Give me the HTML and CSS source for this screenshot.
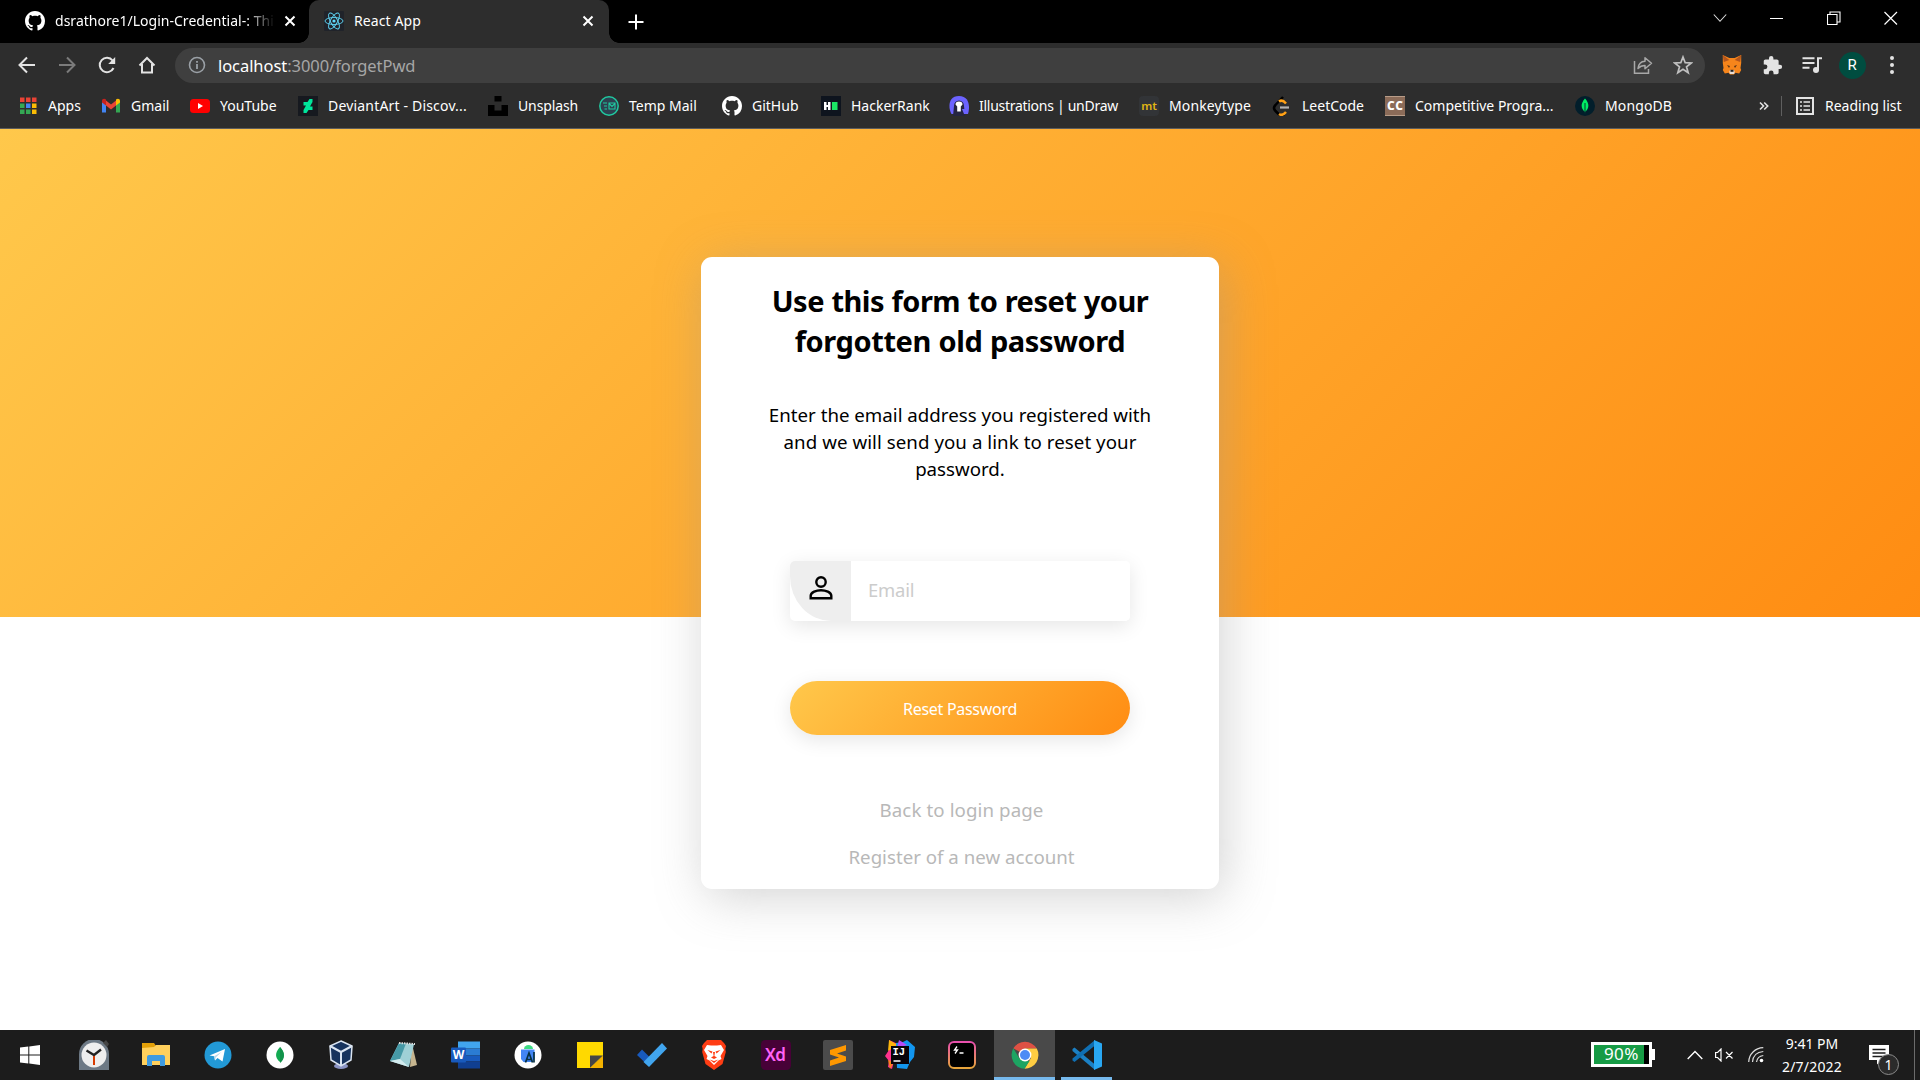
FILE: index.html
```html
<!DOCTYPE html>
<html lang="en">
<head>
<meta charset="utf-8">
<title>React App</title>
<link rel="stylesheet" href="styles.css">
</head>
<body>
<svg class="defs" aria-hidden="true">
  <symbol id="github" viewBox="0 0 16 16"><path fill="#fff" d="M8 0C3.58 0 0 3.58 0 8c0 3.54 2.29 6.53 5.47 7.59.4.07.55-.17.55-.38 0-.19-.01-.82-.01-1.49-2.01.37-2.53-.49-2.69-.94-.09-.23-.48-.94-.82-1.13-.28-.15-.68-.52-.01-.53.63-.01 1.08.58 1.23.82.72 1.21 1.87.87 2.33.66.07-.52.28-.87.51-1.07-1.78-.2-3.64-.89-3.64-3.95 0-.87.31-1.59.82-2.15-.08-.2-.36-1.02.08-2.12 0 0 .67-.21 2.2.82.64-.18 1.32-.27 2-.27s1.36.09 2 .27c1.53-1.04 2.2-.82 2.2-.82.44 1.1.16 1.92.08 2.12.51.56.82 1.27.82 2.15 0 3.07-1.87 3.75-3.65 3.95.29.25.54.73.54 1.48 0 1.07-.01 1.93-.01 2.2 0 .21.15.46.55.38A8.01 8.01 0 0 0 16 8c0-4.42-3.58-8-8-8z"/></symbol>
  <symbol id="cross" viewBox="0 0 12 12"><path d="M1.5 1.5l9 9M10.500 1.5l-9 9" stroke="#fff" stroke-width="2"/></symbol>
</svg>

<header class="browser">
  <div class="tabstrip">
    <div class="tab">
      <svg class="i20"><use href="#github"/></svg>
      <span class="tab-title fade">dsrathore1/Login-Credential-: Thi</span>
      <svg class="i12"><use href="#cross"/></svg>
    </div>
    <div class="tab active">
      <svg class="i20" viewBox="0 0 20 20"><rect width="20" height="20" rx="1" fill="#20232a"/><g fill="none" stroke="#61dafb" stroke-width=".9"><ellipse cx="10" cy="10" rx="9" ry="3.500"/><ellipse cx="10" cy="10" rx="9" ry="3.500" transform="rotate(60 10 10)"/><ellipse cx="10" cy="10" rx="9" ry="3.500" transform="rotate(120 10 10)"/></g><circle cx="10" cy="10" r="1.600" fill="#61dafb"/></svg>
      <span class="tab-title">React App</span>
      <svg class="i12"><use href="#cross"/></svg>
    </div>
    <svg class="newtab" viewBox="0 0 16 16"><path d="M8 .5v15M.5 8h15" stroke="#fff" stroke-width="2"/></svg>
    <div class="window-controls">
      <svg viewBox="0 0 14 14"><path d="M.8 3.500l6.200 6.800 6.200-6.800" fill="none" stroke="#ddd" stroke-width="1.100"/></svg>
      <svg viewBox="0 0 14 14"><path d="M0 7.500h13" stroke="#fff"/></svg>
      <svg viewBox="0 0 14 14"><path d="M.5 3.500h9.500v10H.5zM3 3.500V1h10v10h-3" fill="none" stroke="#fff" stroke-width="1.100"/></svg>
      <svg viewBox="0 0 14 14"><path d="M.5 1l12.500 12.500M13 1L.5 13.500" stroke="#fff" stroke-width="1.200"/></svg>
    </div>
  </div>

  <div class="toolbar">
    <span class="tool"><svg class="i18" viewBox="0 0 18 18"><path d="M17 9H2M9 1.500L1.500 9 9 16.500" fill="none" stroke="#e3e3e3" stroke-width="2"/></svg></span>
    <span class="tool"><svg class="i18" viewBox="0 0 18 18"><path d="M1 9h15M9 1.500L16.500 9 9 16.500" fill="none" stroke="#7b7b7b" stroke-width="2"/></svg></span>
    <span class="tool"><svg class="i18" viewBox="0 0 18 18"><path d="M15.500 12A7.200 7.200 0 1 1 14.600 4.500" fill="none" stroke="#e3e3e3" stroke-width="2"/><path d="M17.200 1v7h-7z" fill="#e3e3e3"/></svg></span>
    <span class="tool"><svg class="i18" viewBox="0 0 18 18"><path d="M1.500 9.500L9 2l7.500 7.500M4 8v8.500h10V8" fill="none" stroke="#e3e3e3" stroke-width="2"/></svg></span>
    <div class="omnibox">
      <svg class="i18" viewBox="0 0 18 18"><circle cx="9" cy="9" r="7.500" fill="none" stroke="#9aa0a6" stroke-width="1.600"/><path d="M9 8v5M9 5v1.800" stroke="#9aa0a6" stroke-width="1.800"/></svg>
      <span class="url"><b>localhost</b>:3000/forgetPwd</span>
      <svg class="i20" viewBox="0 0 20 20"><path d="M1.500 6v12.200h14V14" fill="none" stroke="#a8a8a8" stroke-width="1.500"/><path d="M5 13.500c.5-4.500 3-7 7-7.200V2.800l6.500 5.500-6.500 5.500v-3.300c-3 0-5 .8-7 3z" fill="none" stroke="#a8a8a8" stroke-width="1.500" stroke-linejoin="round"/></svg>
      <svg class="i20" viewBox="0 0 20 20"><path d="M10 2l2.200 5.700 6.100.3-4.800 3.800 1.700 5.900-5.200-3.400-5.200 3.400 1.700-5.900L1.700 8l6.100-.3z" fill="none" stroke="#c0c0c0" stroke-width="1.700"/></svg>
    </div>
    <div class="extensions">
      <span class="tool"><svg class="i20" viewBox="0 0 20 20"><path d="M.8 0l6.500 3h5.400l6.500-3v8l-.7 5 .7 2-2 3.500-3.700-.8L12 19.500H8l-1.500-1.800-3.700.8-2-3.500.7-2-.7-5z" fill="#f6851b"/><path d="M.8 0l6.500 5-5.500 2zM19.200 0l-6.500 5 5.500 2z" fill="#b4561c"/><path d="M5 10l3 1-1 2zM15 10l-3 1 1 2z" fill="#5a3416"/><path d="M8 15h4l.7 2-.7 2H8l-.7-2z" fill="#e8ddd4"/><path d="M8.500 14.800h3v2h-3z" fill="#222"/></svg></span>
      <span class="tool"><svg class="i22" viewBox="0 0 24 24"><path fill="#e3e3e3" d="M20.500 11H19V7c0-1.100-.9-2-2-2h-4V3.500a2.500 2.500 0 0 0-5 0V5H4c-1.100 0-2 .9-2 2v3.800h1.500a2.700 2.700 0 0 1 0 5.400H2V20c0 1.100.9 2 2 2h3.800v-1.500a2.700 2.700 0 0 1 5.400 0V22H17c1.100 0 2-.9 2-2v-4h1.500a2.500 2.500 0 0 0 0-5z"/></svg></span>
      <span class="tool"><svg class="i20" viewBox="0 0 20 20"><path d="M.5 3.200h12M.5 8h12M.5 12.800h7" stroke="#e3e3e3" stroke-width="2"/><path d="M16 15V3.200h4" fill="none" stroke="#e3e3e3" stroke-width="2"/><circle cx="14" cy="15" r="3" fill="#e3e3e3"/></svg></span>
      <span class="tool"><span class="avatar">R</span></span>
      <span class="tool"><svg class="i20" viewBox="0 0 20 20"><g fill="#e3e3e3"><circle cx="10" cy="3" r="2"/><circle cx="10" cy="10" r="2"/><circle cx="10" cy="17" r="2"/></g></svg></span>
    </div>
  </div>

  <nav class="bookmarks">
    <a><svg viewBox="0 0 20 20"><g fill="#ea4335"><path d="M2 1.500h4.500V6H2zM8 1.500h4.500V6H8zM14 1.500h4.500V6H14z"/></g><path fill="#34a853" d="M2 7.500h4.500V12H2zM2 13.500h4.500V18H2z"/><path fill="#4285f4" d="M8 7.500h4.500V12H8z"/><path fill="#34a853" d="M8 13.500h4.500V18H8z"/><path fill="#fbbc05" d="M14 7.500h4.500V12H14zM14 13.500h4.500V18H14z"/></svg><span>Apps</span></a>
    <a><svg viewBox="0 0 20 20"><path fill="#4285f4" d="M1 5v11.500h4V8.800z"/><path fill="#34a853" d="M19 5v11.500h-4V8.800z"/><path fill="#ea4335" d="M5 4.500l5 4 5-4v5l-5 4-5-4z"/><path fill="#c5221f" d="M1 5c0-2 2-3 4-1.500v6L1 6.500z"/><path fill="#fbbc04" d="M19 5c0-2-2-3-4-1.500v6l4-3z"/></svg><span>Gmail</span></a>
    <a><svg viewBox="0 0 20 20"><rect y="3" width="20" height="14" rx="3.500" fill="#f00"/><path fill="#fff" d="M8 7v6l5-3z"/></svg><span>YouTube</span></a>
    <a><svg viewBox="0 0 20 20"><rect width="20" height="20" fill="#16191f"/><path fill="#00e59b" d="M14.500 3v3L12 10.500h2.500V14h-4L8.500 17h-3v-3L8 9.500H5.500V6h4L11.500 3z"/></svg><span class="w1">DeviantArt - Discov...</span></a>
    <a><svg viewBox="0 0 20 20"><path d="M6.500 0h7v5.500h-7zM0 9h6.500v5.500h7V9H20v11H0z" fill="#000"/></svg><span class="n1">Unsplash</span></a>
    <a><svg viewBox="0 0 20 20"><circle cx="10" cy="10" r="9.200" fill="#2d4150" stroke="#20c9a0" stroke-width="1.500"/><path d="M10 7h6v6h-6zM10 7.500l3 3 3-3M4 7h4M5 10h3M5.500 13H8" fill="none" stroke="#20c9a0" stroke-width="1.100"/></svg><span>Temp Mail</span></a>
    <a><svg><use href="#github"/></svg><span>GitHub</span></a>
    <a><svg viewBox="0 0 20 20"><rect width="20" height="20" fill="#0e141e"/><path fill="#fff" d="M3 6h2.500v3H7V6h2.500v8H7v-3H5.500v3H3z"/><path fill="#1be665" d="M11 6h5.500v8H11z"/></svg><span>HackerRank</span></a>
    <a><svg viewBox="0 0 20 20"><path d="M2.500 18C-1 12-1 0 10 0s11 12 9 18z" fill="#6c63ff"/><path d="M4 20l1-10a5 5.500 0 0 1 10 0l1 10z" fill="#252542"/><path d="M6.500 8.500a3.500 3 0 0 1 7 0l-1.700 2v5H8.200v-5z" fill="#fff"/><path d="M13 13h6v5h-4z" fill="#6c63ff"/></svg><span class="n2">Illustrations | unDraw</span></a>
    <a><svg viewBox="0 0 20 20"><rect width="20" height="20" rx="4" fill="#323437"/><text x="10" y="14" text-anchor="middle" font-size="11.500" font-weight="600" fill="#e2b714">mt</text></svg><span class="w2">Monkeytype</span></a>
    <a><svg viewBox="0 0 20 20"><path d="M11 1L3.500 9c-2 2-2 4 0 6l3.500 3.500c1.500 1 3.500 1 5 0" fill="none" stroke="#000" stroke-width="2.500"/><path d="M7 5.500C9 4 11 4 14 7.500M7 18c2 1.500 4 1.500 7-2" fill="none" stroke="#ffa116" stroke-width="2.500"/><path d="M8 11.500h9" stroke="#b3b3b3" stroke-width="2.200"/></svg><span>LeetCode</span></a>
    <a><svg viewBox="0 0 20 20"><rect width="20" height="20" fill="#8b6b58"/><path d="M0 .5h20M0 19.500h20" stroke="#b89c88"/><text x="2" y="14" font-size="12" font-weight="800" fill="#fff" textLength="16">CC</text></svg><span>Competitive Progra...</span></a>
    <a><svg viewBox="0 0 20 20"><circle cx="10" cy="10" r="10" fill="#021e2b"/><path d="M10 2.500c4.500 5 4.500 9.500 0 13.500-4.500-4-4.500-8.500 0-13.500z" fill="#00ed64"/><path d="M10 7v10.500" stroke="#023430"/></svg><span class="w2">MongoDB</span></a>
    <div class="bookmarks-end">
      <svg class="more" viewBox="0 0 10 10"><path d="M1 1.500L4.500 5 1 8.500M5.200 1.500L8.700 5 5.200 8.500" fill="none" stroke="#e3e3e3" stroke-width="1.600"/></svg>
      <i class="divider"></i>
      <svg class="i18" viewBox="0 0 18 18"><path d="M1 1h16v16H1z" fill="none" stroke="#e3e3e3" stroke-width="2"/><path d="M4 5h2M4 9h2M4 13h2M7.500 5H14M7.500 9H14M7.500 13H14" stroke="#e3e3e3" stroke-width="1.700"/></svg>
      <span>Reading list</span>
    </div>
  </nav>
</header>

<main class="page">
  <form class="card">
    <h1>Use this form to reset your<br><span>forgotten old password</span></h1>
    <p>Enter the email address you registered with<br><span>and we will send you a link to reset your</span><br>password.</p>
    <label class="field">
      <span class="field-icon"><svg viewBox="0 0 24 24"><g fill="none" stroke="#000" stroke-width="2.400"><circle cx="12" cy="6" r="4.700"/><path d="M1.700 22.300v-2.500c0-3.500 5.800-5.600 10.300-5.600s10.300 2.100 10.300 5.600v2.500z"/></g></svg></span>
      <input type="email" placeholder="Email">
    </label>
    <button type="button">Reset Password</button>
    <a class="link back">Back to login page</a>
    <a class="link">Register of a new account</a>
  </form>
</main>

<footer class="taskbar">
  <div class="start"><svg viewBox="0 0 20 20"><path fill="#fff" d="M0 2.600L8.300 1.500v8H0zM9.300 1.400L20 0v9.500H9.300zM0 10.500h8.300v8L0 17.400zM9.300 10.500H20V20L9.300 18.600z"/></svg></div>
  <div class="app"><svg viewBox="0 0 30 30"><path d="M0 30V14a15 15 0 0 1 30 0v16z" fill="#6d7985"/><path d="M24 3l3-3 3 4-2 3z" fill="#444"/><circle cx="15" cy="15" r="12.500" fill="#eee"/><path d="M7.500 10.500L15 15l7-5.500" fill="none" stroke="#222" stroke-width="2.300"/><path d="M15 16v9" stroke="#d83b01" stroke-width="2"/></svg></div>
  <div class="app"><svg viewBox="0 0 30 30"><path d="M1 3h12l2 3v4H1z" fill="#e3a008"/><path d="M1 8l12-1 2-2h14v20H1z" fill="#ffd05c"/><path d="M6 26V17q0-2 2-2h14q2 0 2 2v9h-5v-5h-8v5z" fill="#3f9be0"/></svg></div>
  <div class="app"><svg viewBox="0 0 30 30"><circle cx="15" cy="15" r="13.500" fill="#2299d6"/><path d="M6.500 15.500L22 9l-2.500 12.500-5-3.500-2.500 2.500-.8-4.200z" fill="#fff"/><path d="M11.200 16.300L18.500 12l-5.800 5.500L12 20.500z" fill="#b5d7ea"/></svg></div>
  <div class="app"><svg viewBox="0 0 30 30"><circle cx="15" cy="15" r="13.500" fill="#fff"/><path d="M15 7c5.500 6 5 11 0 15-5-4-5.500-9 0-15z" fill="#13aa52"/><path d="M15 7v16c5-4 5.500-10 0-16z" fill="#12924a"/></svg></div>
  <div class="app"><svg viewBox="0 0 30 30"><ellipse cx="14" cy="26" rx="7" ry="3" fill="#8b94c4"/><path d="M14 1l11 5-1 14-10 6-10-6L3 6z" fill="#17335e" stroke="#dbe5f2" stroke-width="1.500"/><path d="M3 6l11 6 11-6M14 12v14" fill="none" stroke="#dbe5f2" stroke-width="2"/></svg></div>
  <div class="app"><svg viewBox="0 0 30 30"><path d="M23 4l5 21-7 2z" fill="#c6b58f"/><path d="M10 3l15 1-5 23-19-6z" fill="#9fd0d6"/><path d="M10 3l7 .5L11 19 1 21z" fill="#4699a6"/><path d="M1 21l10-2 9 8z" fill="#d3ecef"/><path d="M10 3l16 1" stroke="#ddd" stroke-width="2" stroke-dasharray="1.500 1"/></svg></div>
  <div class="app"><svg viewBox="0 0 30 30"><path d="M7 1.500h22v7H7z" fill="#41a5ee"/><path d="M7 8.500h22v7H7z" fill="#2b7cd3"/><path d="M7 15.500h22v6H7z" fill="#185abd"/><path d="M7 21.500h22v7H7z" fill="#103f91"/><rect y="7.500" width="15" height="15" rx="1" fill="#185abd"/><text x="7.500" y="19" text-anchor="middle" font-size="12" font-weight="700" fill="#fff">W</text></svg></div>
  <div class="app"><svg viewBox="0 0 30 30"><circle cx="15" cy="15" r="13.500" fill="#fff"/><path d="M11 9a4.500 4 0 0 1 9 0z" fill="#3ddc84"/><path d="M8 9.500h13.500V19L19 22H10.500L8 19z" fill="#4285f4"/><path d="M12.500 22.500L16 13l3.500 9.500M14 19.500h4M21 12v10.500" fill="none" stroke="#073042" stroke-width="1.700"/></svg></div>
  <div class="app"><svg viewBox="0 0 30 30"><path d="M2 2h26v13.500L15.500 28H2z" fill="#ffd900"/><path d="M15 15.500h13L15 28z" fill="#454545"/><path d="M28 15.500V28H15z" fill="#f3b200"/></svg></div>
  <div class="app"><svg viewBox="0 0 30 30"><path d="M5 9.500l8.500 8.500-4 6L0 15z" fill="#185abd"/><path d="M25 3l5 5.500L12 27l-5.500-5z" fill="#41a5ee"/></svg></div>
  <div class="app"><svg viewBox="0 0 30 30"><path d="M8 0h14l3 3 2 3-.7 3 .5 3-3.300 12L15 30 6.500 24 3.200 12l.5-3L3 6l2-3z" fill="#ff3d14"/><path d="M8 5l4 .6h6L22 5l3 5-3.500 6 1 3-3 1.500L15 25l-4.500-4.500-3-1.500 1-3L5 10z" fill="#fff"/><path d="M8.500 10l5 1.500-1 2zM21.500 10l-5 1.500 1 2zM14 12h2l-.6 4 2.600 1.500-3 1.500-3-1.500 2.600-1.500zM10.500 19.500l4.500 1.500 4.500-1.500L15 23z" fill="#ff3d14"/></svg></div>
  <div class="app"><svg viewBox="0 0 30 30"><rect width="30" height="30" rx="4.500" fill="#470137"/><text x="4" y="21" font-size="17" font-weight="600" fill="#ff61f6" textLength="21">Xd</text></svg></div>
  <div class="app"><svg viewBox="0 0 30 30"><rect width="30" height="30" rx="2" fill="#4b4b4b"/><path d="M23 5v5.500l-9 3 9 3V21L7 26v-5.500l9-3-9-3V10z" fill="#ff9800"/></svg></div>
  <div class="app"><svg viewBox="0 0 30 30"><path d="M4 0l9 4-6 25-4-2 1-6-4-5 4-6z" fill="#ff318c"/><path d="M4 0l9 5-10 6z" fill="#fdb60d"/><path d="M11 3l7-1 4-2 8 7-1 10-4 5-3 7-10-1z" fill="#1296ef"/><path d="M14 0l8 5-10 3z" fill="#b74af7"/><path d="M3 20l6 2-4 7z" fill="#fc801d"/><path d="M6 6h18v18H6z" fill="#08040a"/><text x="7.500" y="15" font-size="10.500" font-weight="700" fill="#fff" class="mono">IJ</text><path d="M8.500 21h7" stroke="#fff" stroke-width="1.500"/></svg></div>
  <div class="app"><svg viewBox="0 0 30 30"><defs><linearGradient id="term" x2="0" y2="1"><stop stop-color="#e84fae"/><stop offset="1" stop-color="#e7a53b"/></linearGradient></defs><rect x="2" y="2" width="26" height="26" rx="5" fill="#000" stroke="url(#term)" stroke-width="2"/><path d="M10 6.500L7.500 10h3L8 13.500M12.500 13h4" fill="none" stroke="#fff" stroke-width="1.300"/></svg></div>
  <div class="app open focused"><svg viewBox="0 0 30 30"><path d="M15 15L3.300 8.300A13.800 13.800 0 0 1 26.800 8.500H15z" fill="#dd5144"/><path d="M15 8.500h11.800A13.800 13.800 0 0 1 14.500 28.800L21 18z" fill="#ffcd42"/><path d="M3.300 8.300L9.500 18.500 15 21h4.500l-5 7.800A13.800 13.800 0 0 1 3.300 8.300z" fill="#1da462"/><circle cx="15" cy="15" r="6.400" fill="#fff"/><circle cx="15" cy="15" r="5" fill="#4c8bf5"/></svg></div>
  <div class="app open"><svg viewBox="0 0 30 30"><path d="M2.500 7.500L23 24.500V30L.5 11V9z" fill="#1b80c4"/><path d="M2.500 22L23 5.500V0L.5 18.500v2z" fill="#0f6fb3"/><path d="M22 0l8 3.500v23L22 30z" fill="#29a7f2"/></svg></div>

  <div class="tray">
    <span class="battery"><span class="level">90%</span></span>
    <svg class="chevron" viewBox="0 0 16 10"><path d="M.7 9L8 1.500 15.300 9" fill="none" stroke="#fff" stroke-width="1.400"/></svg>
    <svg class="volume" viewBox="0 0 18 14"><path d="M.6 4.500h2L6 1v12L2.600 9.500h-2zM11 4l6.500 6.500M17.500 4L11 10.500" fill="none" stroke="#fff" stroke-width="1.200"/></svg>
    <svg class="wifi" viewBox="0 0 16 16"><g fill="none" stroke="#ddd" stroke-width="1.200"><path d="M.7 15C1 7 7 1 15.300.7M4.500 15C5 9 9 5 15.300 4.500M8.500 15c.5-3.500 3-6 6.800-6.500"/></g><circle cx="13.500" cy="13.500" r="1.800" fill="#fff"/></svg>
    <div class="clock"><span>9:41 PM</span><span class="w1">2/7/2022</span></div>
    <div class="notifications">
      <svg viewBox="0 0 20 20"><path d="M0 0h20v15h-7l-5 4.500V15H0z" fill="#fff"/><path d="M3.500 4.500h13M3.500 8h13M3.500 11.500h13" stroke="#1c1c1c" stroke-width="1.300"/></svg>
      <span class="badge">1</span>
    </div>
    <i class="show-desktop"></i>
  </div>
</footer>
</body>
</html>
```
FILE: styles.css
```css
* { box-sizing: border-box; }

body {
  margin: 0;
  width: 1920px;
  height: 1080px;
  overflow: hidden;
  display: flex;
  flex-direction: column;
  font-family: "Noto Sans", "Open Sans", sans-serif;
  font-size: 14px;
  color: #fff;
  background: #fff;
}

svg { display: block; flex: none; }
.defs { position: absolute; width: 0; height: 0; }
.i12 { width: 12px; height: 12px; }
.i18 { width: 18px; height: 18px; }
.i20 { width: 20px; height: 20px; }
.i22 { width: 21px; height: 21px; }

/* browser chrome */
.browser {
  flex: none;
  height: 129px;
  background: #2d2d2d;
  border-bottom: 1px solid #5c5c5c;
}

.tabstrip {
  height: 43px;
  display: flex;
  align-items: center;
  background: #000;
}

.tab {
  width: 309px;
  height: 43px;
  padding: 0 13px 2px 25px;
  display: flex;
  align-items: center;
  gap: 10px;
}

.tab-title {
  flex: 1;
  white-space: nowrap;
  letter-spacing: .09px;
}

.fade {
  margin-right: -1px;
  letter-spacing: .02px;
  mask-image: linear-gradient(90deg, #000 190px, transparent 220px);
}

.active {
  position: relative;
  width: 300px;
  padding: 0 15px 2px;
  background: #2d2d2d;
  border-radius: 10px 10px 0 0;
}

.active::before,
.active::after {
  content: "";
  position: absolute;
  bottom: 0;
  width: 10px;
  height: 10px;
}
.active::before { left: -10px; background: radial-gradient(circle at 0 0, transparent 9.5px, #2d2d2d 10px); }
.active::after { right: -10px; background: radial-gradient(circle at 100% 0, transparent 9.5px, #2d2d2d 10px); }

.newtab { width: 16px; height: 16px; margin-left: 19px; }

.window-controls {
  margin-left: auto;
  padding: 0 22px 7px 0;
  display: flex;
  gap: 43px;
}
.window-controls svg { width: 14px; height: 14px; }

.toolbar {
  height: 44px;
  padding-left: 7px;
  display: flex;
  align-items: center;
}

.tool {
  width: 40px;
  display: flex;
  align-items: center;
  justify-content: center;
}

.omnibox {
  width: 1530px;
  height: 35px;
  margin-left: 8px;
  padding: 0 12px 0 13px;
  display: flex;
  align-items: center;
  border-radius: 18px;
  background: #3f3f3f;
}
.omnibox .i20 + .i20 { margin-left: 20px; }

.url {
  flex: 1;
  margin-left: 12px;
  font-size: 16.5px;
  letter-spacing: -.06px;
  color: #a6a6a6;
}
.url b { font-weight: 400; color: #fff; }

.extensions { display: flex; margin-left: 7px; }

.avatar {
  width: 27px;
  height: 27px;
  border-radius: 50%;
  background: #004d40;
  font: 15px/27px Roboto, sans-serif;
  text-align: center;
}

.bookmarks {
  height: 38px;
  padding-left: 18px;
  display: grid;
  grid-template-columns: 83px 89px 108px 190px 111px 123px 99px 128px 190px 133px 113px 190px 171px 1fr;
  align-items: center;
  white-space: nowrap;
}
.bookmarks a { display: flex; align-items: center; gap: 10px; }
.bookmarks a svg { width: 20px; height: 20px; }
.bookmarks span { padding-bottom: 2px; }
.w1 { letter-spacing: .18px; }
.w2 { letter-spacing: .12px; }
.n1 { letter-spacing: -.12px; }
.n2 { letter-spacing: -.28px; }

.bookmarks-end { display: flex; align-items: center; padding-left: 13px; }
.more { width: 10px; height: 10px; }
.divider { width: 1px; height: 20px; margin: 0 14px 0 12px; background: #5f5f5f; }
.bookmarks-end span { margin-left: 11px; }

/* page */
.page {
  flex: 1;
  display: flex;
  justify-content: center;
  align-items: flex-start;
  padding-top: 128px;
  background: #fff linear-gradient(135deg, #ffc84b, #ff8c12) no-repeat 0 0 / 100% 488px;
}

.card {
  width: 518px;
  height: 632px;
  padding-top: 24px;
  display: flex;
  flex-direction: column;
  align-items: center;
  border-radius: 11px;
  background: #fff;
  box-shadow: 5px 8px 50px rgba(150, 150, 150, .42);
  color: #000;
  text-align: center;
}

.card h1 {
  margin: 0;
  font-size: 29px;
  line-height: 40px;
  letter-spacing: -.5px;
  word-spacing: .4px;
}
.card h1 span { letter-spacing: -.4px; }

.card p {
  margin: 40px 0 79px;
  font-size: 18.7px;
  line-height: 27px;
}
.card p span { letter-spacing: .06px; }

.field {
  width: 340px;
  height: 60px;
  display: flex;
  border-radius: 5px;
  overflow: hidden;
  box-shadow: 0 5px 20px rgba(0, 0, 0, .1);
}

.field-icon {
  width: 61px;
  padding: 15px 0 0 19px;
  border-bottom-left-radius: 41px 45px;
  background: #eee;
}
.field-icon svg { width: 24px; height: 24px; }

.field input {
  flex: 1;
  min-width: 0;
  padding: 0 17px 4px;
  border: 0;
  font: 18.4px "Noto Sans", sans-serif;
  letter-spacing: -.2px;
}
.field input::placeholder { color: #ccc; }

.card button {
  width: 340px;
  height: 54px;
  margin-top: 60px;
  padding: 1px 0 0;
  border: 0;
  border-radius: 27px;
  background: linear-gradient(135deg, #ffc84b, #ff8c12);
  box-shadow: 0 5px 20px rgba(0, 0, 0, .1);
  font: 16px "Noto Sans", sans-serif;
  letter-spacing: -.28px;
  color: #fff;
}

.link {
  margin-left: 3px;
  font-size: 18.7px;
  line-height: 27px;
  color: #b8b8b8;
}
.back { margin: 61px 0 20px 3px; letter-spacing: .1px; }

/* taskbar */
.taskbar {
  flex: none;
  height: 50px;
  display: flex;
  background: #1c1c1c;
}
.start { width: 63px; padding: 15px 0 0 20px; }
.start svg { width: 20px; height: 20px; }

.app {
  width: 62px;
  display: flex;
  align-items: center;
  justify-content: center;
}
.app svg { width: 30px; height: 30px; }
.app.open {
  width: 51px;
  margin-left: 6px;
  padding-top: 3px;
  border-bottom: 3px solid #76b9ed;
}
.app.focused { width: 61px; margin-left: 1px; background: #494949; }
.mono { font-family: "Liberation Mono", monospace; }

.tray {
  flex: 1;
  display: flex;
  align-items: center;
  padding-left: 479px;
}

.battery {
  position: relative;
  width: 61px;
  height: 25px;
  margin-bottom: 1px;
  border: 3px solid #fff;
  background: #000;
}
.battery::after {
  content: "";
  position: absolute;
  right: -6px;
  top: 4px;
  width: 3px;
  height: 11px;
  background: #fff;
}
.level {
  display: block;
  width: 50px;
  height: 19px;
  padding-left: 10px;
  background: #169b45;
  font-size: 17px;
  line-height: 18px;
  letter-spacing: .4px;
}

.chevron { width: 16px; height: 10px; margin-left: 35px; }
.volume { width: 18px; height: 14px; margin-left: 12px; }
.wifi { width: 16px; height: 16px; margin-left: 15px; }

.clock {
  width: 62px;
  margin-left: 17px;
  display: flex;
  flex-direction: column;
  align-items: center;
  line-height: 23px;
}

.notifications { position: relative; width: 20px; height: 20px; margin: 0 0 1px 26px; }
.notifications svg { width: 20px; height: 20px; }
.badge {
  position: absolute;
  left: 9px;
  top: 9px;
  width: 21px;
  height: 21px;
  border: 1px solid #8b8b8b;
  border-radius: 50%;
  background: #2b2b2b;
  line-height: 19px;
  text-align: center;
}
.show-desktop { align-self: stretch; width: 1px; margin-left: 25px; background: #6b6b6b; }
```
